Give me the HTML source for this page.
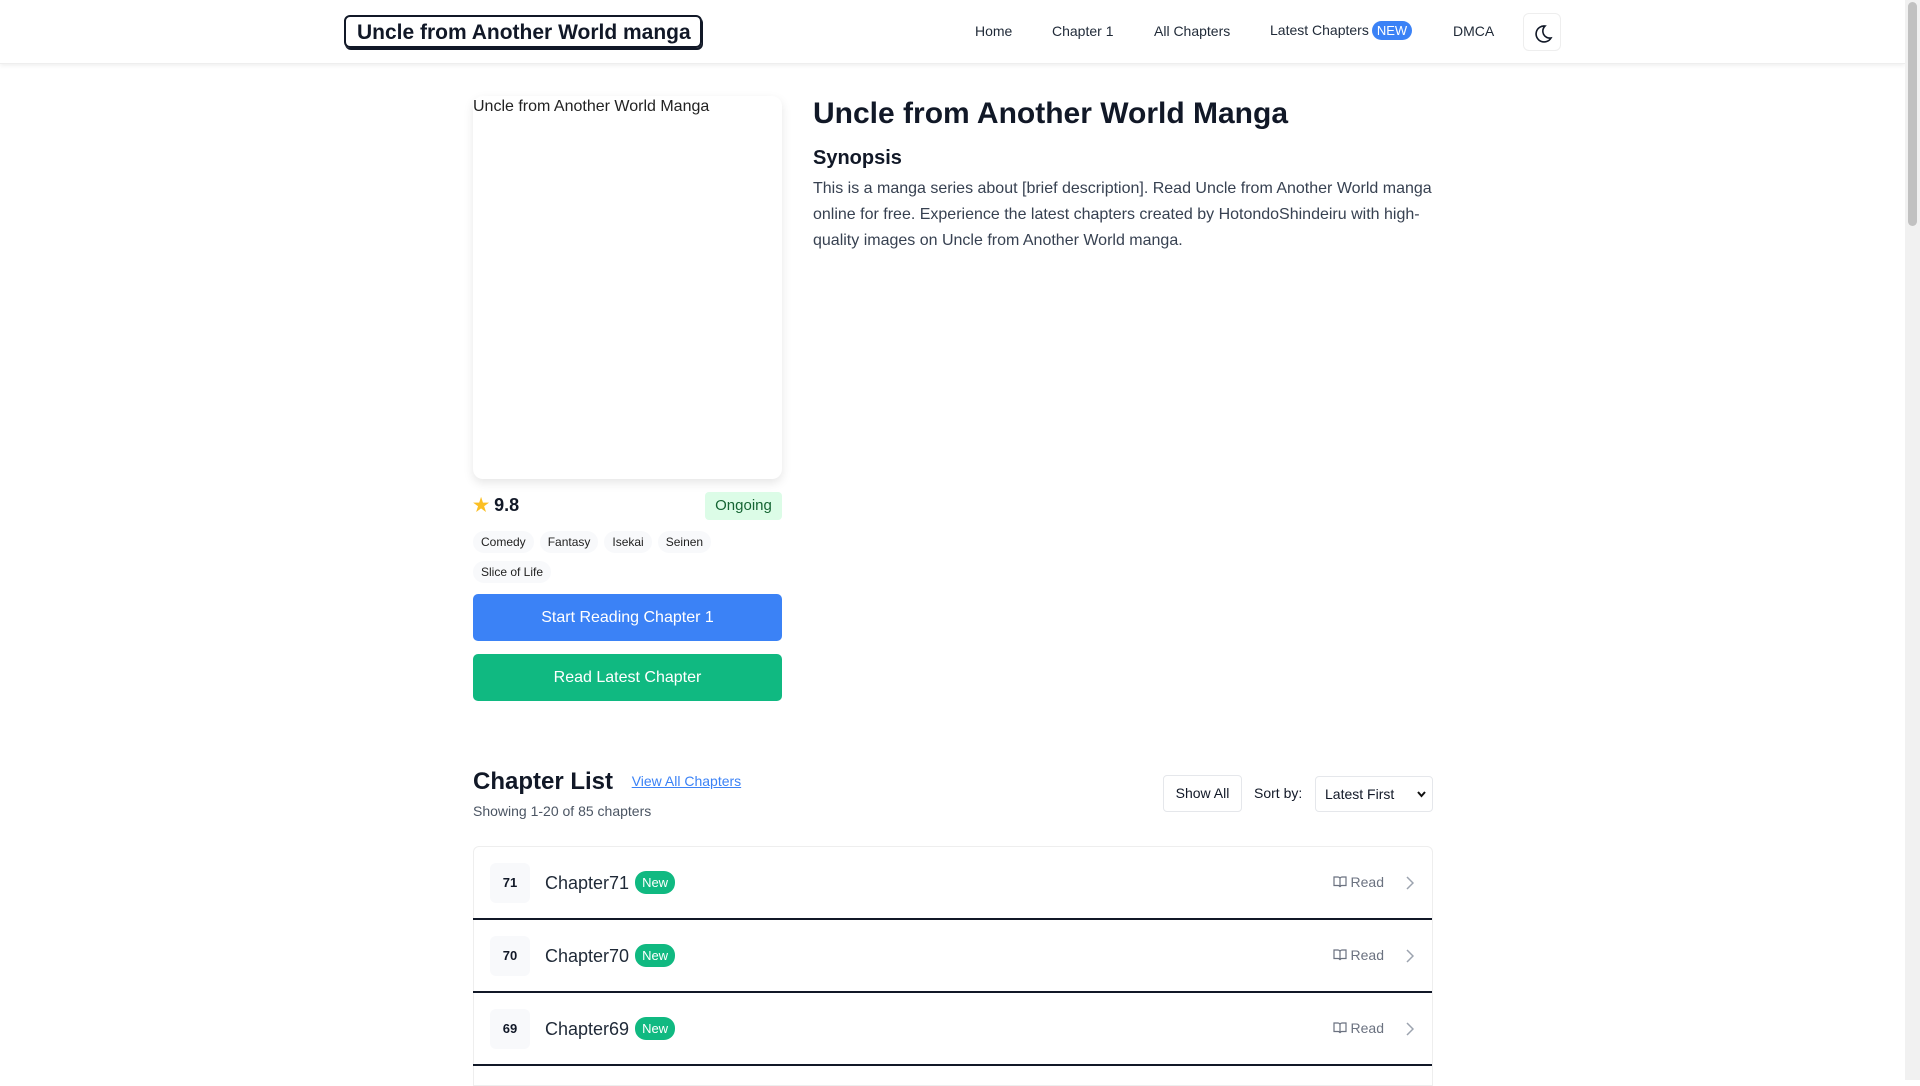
<!DOCTYPE html>
<html><head><meta charset="utf-8"><style>
*{box-sizing:border-box;margin:0;padding:0}
body{width:1920px;height:1080px;overflow:hidden;font-family:"Liberation Sans",Arial,sans-serif;color:#111827;background:#fff;position:relative}
.sb{position:absolute;right:0;top:0;width:15px;height:1080px;background:#f1f1f1}
.sb div{position:absolute;left:3px;right:3px;top:2px;height:224px;background:#c1c1c1;border-radius:5px}
nav{position:absolute;left:0;top:0;width:1905px;height:64px;background:#fff;border-bottom:1px solid #eee;box-shadow:0 2px 4px rgba(0,0,0,.06)}
.logo{position:absolute;left:344px;top:15px;width:358px;height:33px;border:2px solid #111827;border-radius:6px;font-weight:bold;font-size:21px;line-height:31px;padding-left:11px;white-space:nowrap;box-shadow:1px 2px 0 #111827}
.nl{position:absolute;top:23px;font-size:14px;color:#1f2937;white-space:nowrap}
.new{background:#3b82f6;color:#fff;border-radius:10px;padding:2px 5px;font-size:13px;margin-left:3px}
.moon{position:absolute;left:1523px;top:13px;width:38px;height:38px;border:1px solid #eee;border-radius:6px}
.cover{position:absolute;left:473px;top:96px;width:309px;height:383px;border-radius:10px;box-shadow:0 4px 10px rgba(0,0,0,.1);font-size:16px;padding:2px 0;color:#222}
.tag{display:inline-block;background:#f8f9fb;border-radius:14px;padding:2px 8px;font-size:12px;line-height:18px;margin:0 6px 8px 0;color:#222}
.btn{position:absolute;left:473px;width:309px;height:47px;border-radius:5px;color:#fff;font-size:16px;text-align:center;line-height:47px}
.row{position:absolute;left:473px;width:959px;height:73px;border-bottom:2px solid #111827}
.num{position:absolute;left:17px;top:16px;width:40px;height:40px;background:#f8f9fb;border-radius:6px;font-weight:bold;font-size:13px;text-align:center;line-height:40px}
.ct{position:absolute;left:72px;top:26px;font-size:18px;color:#1f2937}
.nb{background:#10b981;color:#fff;border-radius:11px;font-size:13px;padding:4px 7px;margin-left:6px;position:relative;top:-2px}
.rd{position:absolute;right:48px;top:27px;font-size:14px;color:#6b7280}
.ar{position:absolute;right:18px;top:29px}
</style></head><body>
<nav>
<div class="logo">Uncle from Another World manga</div>
<span class="nl" style="left:975px">Home</span>
<span class="nl" style="left:1052px">Chapter 1</span>
<span class="nl" style="left:1154px">All Chapters</span>
<span class="nl" style="left:1270px;top:22px">Latest Chapters<span class="new">NEW</span></span>
<span class="nl" style="left:1453px">DMCA</span>
<div class="moon"><svg width="38" height="38" viewBox="0 0 38 38"><path d="M21 12a8 8 0 1 0 6 12a7 7 0 0 1-6-12z" fill="none" stroke="#111827" stroke-width="1.6"/></svg></div>
</nav>
<div class="cover">Uncle from Another World Manga</div>
<div style="position:absolute;left:813px;top:97px;font-size:30px;font-weight:bold">Uncle from Another World Manga</div>
<div style="position:absolute;left:813px;top:147px;font-size:20px;font-weight:bold">Synopsis</div>
<div style="position:absolute;left:813px;top:176px;width:620px;font-size:16px;line-height:26px;color:#374151">This is a manga series about [brief description]. Read Uncle from Another World manga online for free. Experience the latest chapters created by HotondoShindeiru with high-quality images on Uncle from Another World manga.</div>
<div style="position:absolute;left:473px;top:495px;font-size:18px;font-weight:bold"><span style="color:#fbbf24;font-size:18px">★</span> 9.8</div>
<div style="position:absolute;left:705px;top:492px;width:77px;height:28px;background:#dcfce7;color:#166534;border-radius:4px;text-align:center;line-height:28px;font-size:15px">Ongoing</div>
<div style="position:absolute;left:473px;top:531px;width:320px;line-height:18px"><span class="tag">Comedy</span><span class="tag">Fantasy</span><span class="tag">Isekai</span><span class="tag">Seinen</span><br><span class="tag">Slice of Life</span></div>
<div class="btn" style="top:594px;background:#3b82f6">Start Reading Chapter 1</div>
<div class="btn" style="top:654px;background:#10b981">Read Latest Chapter</div>
<div style="position:absolute;left:473px;top:768px;font-size:24px;font-weight:bold">Chapter List <a style="font-size:14px;font-weight:normal;color:#3b82f6;text-decoration:underline;margin-left:12px;position:relative;top:-3px">View All Chapters</a></div>
<div style="position:absolute;left:473px;top:803px;font-size:14px;color:#4b5563">Showing 1-20 of 85 chapters</div>
<div style="position:absolute;left:1163px;top:775px;width:79px;height:37px;border:1px solid #e5e7eb;border-radius:4px;text-align:center;line-height:35px;font-size:14px">Show All</div>
<div style="position:absolute;left:1254px;top:785px;font-size:14px">Sort by:</div>
<div style="position:absolute;left:1315px;top:776px;width:118px;height:36px;border:1px solid #e5e7eb;border-radius:4px;line-height:34px;font-size:14px;padding-left:9px">Latest First <svg style="position:absolute;right:6px;top:14px" width="9" height="7" viewBox="0 0 9 7"><path d="M1 1l3.5 4L8 1" fill="none" stroke="#111" stroke-width="2"/></svg></div>
<div style="position:absolute;left:473px;top:846px;width:960px;height:240px;border:1px solid #eee;border-radius:6px 6px 0 0"></div>
<div class="row" style="top:847px"><div class="num">71</div><div class="ct">Chapter71<span class="nb">New</span></div><div class="rd"><svg width="14" height="12" viewBox="0 0 14 12" style="vertical-align:-1px"><path d="M1 1h4a2 2 0 0 1 2 2v8a2 2 0 0 0-2-1.5H1zM13 1H9a2 2 0 0 0-2 2v8a2 2 0 0 1 2-1.5h4z" fill="none" stroke="#6b7280" stroke-width="1.2"/></svg> Read</div><div class="ar"><svg width="8" height="14" viewBox="0 0 8 14"><path d="M1 1l6 6-6 6" fill="none" stroke="#9ca3af" stroke-width="1.5"/></svg></div></div>
<div class="row" style="top:920px"><div class="num">70</div><div class="ct">Chapter70<span class="nb">New</span></div><div class="rd"><svg width="14" height="12" viewBox="0 0 14 12" style="vertical-align:-1px"><path d="M1 1h4a2 2 0 0 1 2 2v8a2 2 0 0 0-2-1.5H1zM13 1H9a2 2 0 0 0-2 2v8a2 2 0 0 1 2-1.5h4z" fill="none" stroke="#6b7280" stroke-width="1.2"/></svg> Read</div><div class="ar"><svg width="8" height="14" viewBox="0 0 8 14"><path d="M1 1l6 6-6 6" fill="none" stroke="#9ca3af" stroke-width="1.5"/></svg></div></div>
<div class="row" style="top:993px"><div class="num">69</div><div class="ct">Chapter69<span class="nb">New</span></div><div class="rd"><svg width="14" height="12" viewBox="0 0 14 12" style="vertical-align:-1px"><path d="M1 1h4a2 2 0 0 1 2 2v8a2 2 0 0 0-2-1.5H1zM13 1H9a2 2 0 0 0-2 2v8a2 2 0 0 1 2-1.5h4z" fill="none" stroke="#6b7280" stroke-width="1.2"/></svg> Read</div><div class="ar"><svg width="8" height="14" viewBox="0 0 8 14"><path d="M1 1l6 6-6 6" fill="none" stroke="#9ca3af" stroke-width="1.5"/></svg></div></div>
<div class="sb"><div></div></div>
</body></html>
